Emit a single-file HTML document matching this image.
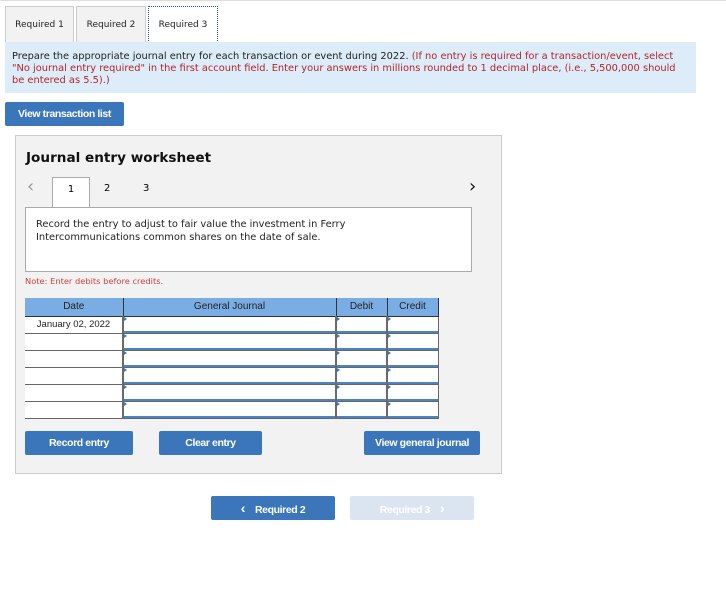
<!DOCTYPE html>
<html><head><style>
*{margin:0;padding:0;box-sizing:border-box}
body{width:726px;height:603px;background:#fff;position:relative;font-family:"DejaVu Sans",Verdana,sans-serif;overflow:hidden}
.a{position:absolute}
.tab{position:absolute;top:6px;height:37px;background:#f2f2f2;border:1px solid #ccc;border-bottom:none;font-size:9px;color:#222;text-align:center;line-height:36px}
.btn{position:absolute;background:#3b76bb;color:#fff;font-family:"Liberation Sans",Arial,sans-serif;font-weight:bold;font-size:10.5px;text-align:center;letter-spacing:-0.4px;border-radius:2px}
table{border-collapse:collapse;position:absolute;left:25px;top:298px;font-family:"Liberation Sans",Arial,sans-serif;font-size:10px}
th{background:#7aade3;font-weight:normal;height:18px;border:1px solid #333;border-top:none;color:#222}
td{height:17px;border-bottom:1px solid #666;background:#fff;padding:0}
td.i{border:1px solid #666;border-left:2px solid #6a6a6a;position:relative}
td.i div{position:absolute;left:0;right:0;top:0;bottom:0;border-bottom:2px solid #4a84c4}
td.i div:before{content:"";position:absolute;left:0;top:0;border-left:3px solid #3b76bb;border-top:2px solid transparent;border-bottom:2px solid transparent}
</style></head><body>
<div class="a" style="left:0;top:0;width:726px;height:1px;background:#ddd"></div>
<div class="tab" style="left:5px;width:69px">Required 1</div>
<div class="tab" style="left:76px;width:70px">Required 2</div>
<div class="tab" style="left:148px;width:70px;background:#fff;border:1px dotted #34508a;border-bottom:none">Required 3</div>
<div class="a" style="left:5px;top:42px;width:691px;height:51px;background:#dcecf8;padding:9px 0 0 7px;font-size:9.85px;line-height:12px;color:#222;white-space:nowrap">Prepare the appropriate journal entry for each transaction or event during 2022. <span style="color:#b5242a">(If no entry is required for a transaction/event, select<br>"No journal entry required" in the first account field. Enter your answers in millions rounded to 1 decimal place, (i.e., 5,500,000 should<br>be entered as 5.5).)</span></div>
<div class="btn" style="left:5px;top:102px;width:119px;height:24px;line-height:24px">View transaction list</div>

<div class="a" style="left:15px;top:135px;width:487px;height:339px;background:#f2f2f2;border:1px solid #ccc"></div>
<div class="a" style="left:26px;top:150px;font-size:13.6px;font-weight:bold;color:#111">Journal entry worksheet</div>
<div class="a" style="left:27px;top:176px;font-size:18px;color:#999">&#8249;</div>
<div class="a" style="left:469px;top:176px;font-size:18px;color:#111">&#8250;</div>
<div class="a" style="left:52px;top:177px;width:38px;height:32px;background:#fff;border:1px solid #aaa;border-bottom:none;font-size:10px;text-align:center;line-height:24px">1</div>
<div class="a" style="left:104px;top:183px;font-size:10px">2</div>
<div class="a" style="left:143px;top:183px;font-size:10px">3</div>
<div class="a" style="left:25px;top:207px;width:447px;height:65px;background:#fff;border:1px solid #aaa;padding:11px 0 0 10px;font-size:9.85px;line-height:12.5px;color:#222">Record the entry to adjust to fair value the investment in Ferry<br>Intercommunications common shares on the date of sale.</div>
<div class="a" style="left:25px;top:276px;font-size:8.3px;color:#d04040">Note: Enter debits before credits.</div>

<table>
<tr><th style="width:98px;border-left:none">Date</th><th style="width:213px">General Journal</th><th style="width:51px">Debit</th><th style="width:51px">Credit</th></tr>
<tr><td style="text-align:center;color:#222;font-size:9.5px">January 02, 2022</td><td class="i"><div></div></td><td class="i"><div></div></td><td class="i"><div></div></td></tr>
<tr><td></td><td class="i"><div></div></td><td class="i"><div></div></td><td class="i"><div></div></td></tr>
<tr><td></td><td class="i"><div></div></td><td class="i"><div></div></td><td class="i"><div></div></td></tr>
<tr><td></td><td class="i"><div></div></td><td class="i"><div></div></td><td class="i"><div></div></td></tr>
<tr><td></td><td class="i"><div></div></td><td class="i"><div></div></td><td class="i"><div></div></td></tr>
<tr><td></td><td class="i"><div></div></td><td class="i"><div></div></td><td class="i"><div></div></td></tr>
</table>

<div class="btn" style="left:25px;top:431px;width:108px;height:24px;line-height:24px">Record entry</div>
<div class="btn" style="left:159px;top:431px;width:103px;height:24px;line-height:24px">Clear entry</div>
<div class="btn" style="left:364px;top:431px;width:116px;height:24px;line-height:24px">View general journal</div>

<div class="btn" style="left:211px;top:496px;width:124px;height:24px;line-height:24px"><span style="margin-right:10px;font-size:14px">&#8249;</span>Required 2</div>
<div class="btn" style="left:350px;top:496px;width:124px;height:24px;line-height:24px;background:#dbe5f2">Required 3<span style="margin-left:10px;font-size:14px">&#8250;</span></div>
</body></html>
